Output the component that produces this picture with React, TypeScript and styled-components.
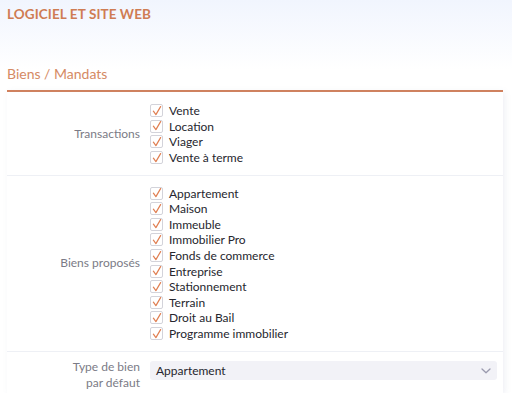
import React from "react";
import styled, { createGlobalStyle } from "styled-components";

const Global = createGlobalStyle`
  html, body { margin: 0; padding: 0; }
  body {
    font-family: Lato, "Noto Sans", sans-serif;
    background: linear-gradient(180deg, #f1f5fe 0px, #ffffff 70px, #ffffff 100%);
    min-height: 393px;
    overflow: hidden;
  }
`;

const Page = styled.div`
  padding: 6px 9px 0 7px;
  display: flex;
  flex-direction: column;
`;

const Title = styled.h1`
  margin: 0;
  font-size: 13.5px;
  font-weight: 700;
  color: #cf7c53;
  letter-spacing: 0.1px;
  line-height: 16px;
`;

const SectionTitle = styled.h2`
  margin: 43px 0 0 0;
  font-size: 14px;
  font-weight: 400;
  color: #d58a64;
  line-height: 18px;
  padding-bottom: 7px;
  border-bottom: 2px solid #d4825c;
`;

const Card = styled.div`
  background: #ffffff;
  box-shadow: 2px 0 6px rgba(120, 130, 170, 0.12);
  display: flex;
  flex-direction: column;
`;

const Row = styled.div<{ $pt: number; $pb: number; $top?: boolean }>`
  display: grid;
  grid-template-columns: 133px 1fr;
  column-gap: 10px;
  align-items: ${(p) => (p.$top ? "start" : "center")};
  padding: ${(p) => p.$pt}px 6px ${(p) => p.$pb}px 0;
  border-bottom: 1px solid #eef0f5;
  &:last-child { border-bottom: none; }
`;

const Label = styled.div`
  text-align: right;
  color: #7b7b86;
  font-size: 12px;
  line-height: 16px;
`;

const List = styled.div`
  display: flex;
  flex-direction: column;
`;

const Item = styled.label`
  display: flex;
  align-items: center;
  gap: 6px;
  height: 15.6px;
  font-size: 12px;
  color: #26262e;
`;

const Box = styled.span`
  width: 11px;
  height: 11px;
  border: 1px solid #d3d3da;
  border-radius: 2px;
  display: flex;
  align-items: center;
  justify-content: center;
  flex: none;
  background: #fff;
`;

const Select = styled.div`
  margin-top: 2px;
  height: 19px;
  background: #f2f2f7;
  border-radius: 3px;
  display: flex;
  align-items: center;
  justify-content: space-between;
  padding: 0 6px 0 6px;
  font-size: 12px;
  color: #26262e;
`;

const Check = () => (
  <svg width="10" height="10" viewBox="0 0 10 10">
    <path d="M1.4 5.2 L3.9 8.6 L8.6 0.6" fill="none" stroke="#e07f52" strokeWidth="1.2" strokeLinecap="round" strokeLinejoin="round" />
  </svg>
);

const Chevron = () => (
  <svg width="10" height="6" viewBox="0 0 10 6">
    <path d="M1 1 L5 4.8 L9 1" fill="none" stroke="#9a9aae" strokeWidth="1.3" strokeLinecap="round" strokeLinejoin="round" />
  </svg>
);

const transactions = ["Vente", "Location", "Viager", "Vente à terme"];
const biens = [
  "Appartement",
  "Maison",
  "Immeuble",
  "Immobilier Pro",
  "Fonds de commerce",
  "Entreprise",
  "Stationnement",
  "Terrain",
  "Droit au Bail",
  "Programme immobilier",
];

const CheckList = ({ items }: { items: string[] }) => (
  <List>
    {items.map((t) => (
      <Item key={t}>
        <Box>
          <Check />
        </Box>
        {t}
      </Item>
    ))}
  </List>
);

export default function App() {
  return (
    <>
      <Global />
      <Page>
        <Title>LOGICIEL ET SITE WEB</Title>
        <SectionTitle>Biens / Mandats</SectionTitle>
        <Card>
          <Row $pt={11} $pb={10}>
            <Label>Transactions</Label>
            <CheckList items={transactions} />
          </Row>
          <Row $pt={9} $pb={10}>
            <Label>Biens proposés</Label>
            <CheckList items={biens} />
          </Row>
          <Row $pt={7} $pb={4} $top>
            <Label>
              Type de bien
              <br />
              par défaut
            </Label>
            <Select>
              Appartement
              <Chevron />
            </Select>
          </Row>
        </Card>
      </Page>
    </>
  );
}
